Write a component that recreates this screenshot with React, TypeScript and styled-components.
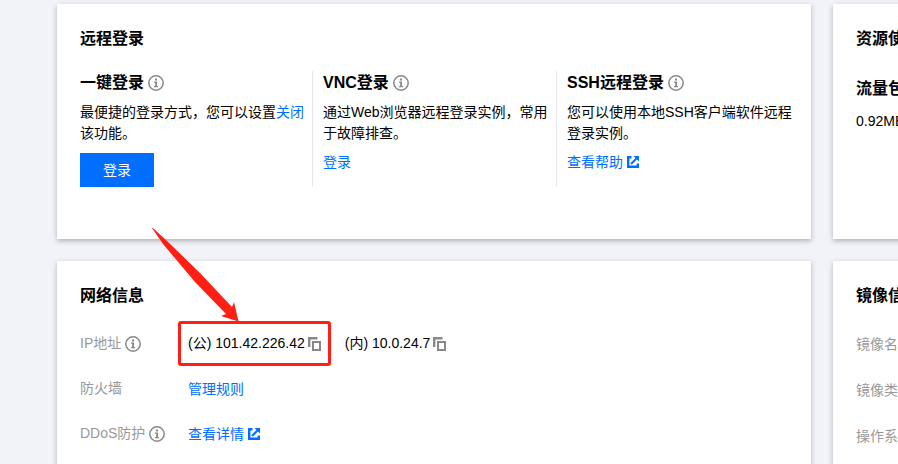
import React from "react";
import styled, { createGlobalStyle } from "styled-components";

const GlobalStyle = createGlobalStyle`
  * { box-sizing: border-box; }
  body {
    margin: 0;
    background: #f2f3f8;
    color: #000;
    font: 14px/21px "Liberation Sans", "Noto Sans CJK SC", sans-serif;
    overflow: hidden;
  }
`;

const Page = styled.main`
  min-height: 100vh;
  padding: 4px 0 0 57px;
  overflow: hidden;
`;

const Board = styled.div`
  display: grid;
  grid-template-columns: minmax(0, 1fr) 320px;
  gap: 22px;
  margin-right: -255px;
`;

const Card = styled.section`
  padding: 23px 11px 52px 23px;
  background: #fff;
  box-shadow: 0 2px 5px rgba(54, 58, 80, 0.36);
`;

const CardTitle = styled.h2`
  margin: 0 0 20px;
  font-size: 16px;
  line-height: 24px;
  font-weight: 700;
`;

const Methods = styled.div`
  display: grid;
  grid-template-columns: repeat(3, minmax(0, 1fr));
  margin-left: -12px;
`;

const Method = styled.div`
  padding: 0 6px 0 10px;
  border-left: 1px solid #e5e7ed;

  &:first-child {
    padding-left: 12px;
    border-left: 0;
  }
`;

const MethodTitle = styled.h3`
  display: flex;
  align-items: center;
  gap: 4px;
  margin: 0 0 7px;
  font-size: 16px;
  line-height: 24px;
  font-weight: 700;
`;

const Paragraph = styled.p`
  margin: 0 0 9px;
`;

const Link = styled.a`
  display: flex;
  align-items: center;
  gap: 4px;
  width: fit-content;
  color: #006eff;
  line-height: 18px;
  text-decoration: none;
`;

const InlineLink = styled.a`
  color: #006eff;
  text-decoration: none;
`;

const PrimaryButton = styled.button`
  display: block;
  height: 34px;
  padding: 0 23px;
  border: 0;
  background: #006eff;
  color: #fff;
  font: inherit;
`;

const UsageTitle = styled.h3`
  margin: 26px 0 10px;
  font-size: 16px;
  line-height: 24px;
  font-weight: 700;
`;

const Fields = styled.dl<{ $loose?: boolean }>`
  display: grid;
  gap: ${({ $loose }) => ($loose ? "25px" : "24px")};
  margin: 0;
  padding-top: ${({ $loose }) => ($loose ? "6px" : "5px")};
`;

const Field = styled.div`
  display: flex;
  align-items: center;
`;

const FieldLabel = styled.dt`
  display: flex;
  flex: 0 0 108px;
  align-items: center;
  gap: 4px;
  color: #999;
`;

const FieldValue = styled.dd`
  display: flex;
  gap: 24px;
  margin: 0;
`;

const Address = styled.span`
  position: relative;
  display: flex;
  align-items: center;
  gap: 3px;
`;

const IconButton = styled.button`
  display: flex;
  padding: 0;
  border: 0;
  background: none;
  color: #888;
`;

const Highlight = styled.span`
  position: absolute;
  inset: -12px -10px;
  border: 3px solid #ff1f14;
  border-radius: 3px;
  pointer-events: none;
`;

const Arrow = styled.svg`
  position: absolute;
  left: -29px;
  bottom: 100%;
`;

const Glyph = styled.svg`
  display: block;
  flex: none;
`;

function InfoIcon() {
  return (
    <Glyph width="16" height="16" viewBox="0 0 16 16" fill="none" aria-hidden="true">
      <circle cx="8" cy="8" r="7.2" stroke="#888" strokeWidth="1.5" />
      <path d="M7 3.500h2v2H7zM6 6.500h3V11h1v1.200H6V11h1.200V7.700H6z" fill="#888" />
    </Glyph>
  );
}

function CopyIcon() {
  return (
    <Glyph width="13" height="14" viewBox="0 0 13 14" fill="none" stroke="currentColor" aria-hidden="true">
      <path d="M9.500 1.200H1.200V10" strokeWidth="2.400" />
      <path d="M5 5h7v8H5z" strokeWidth="2" />
    </Glyph>
  );
}

function ExternalIcon() {
  return (
    <Glyph width="12" height="12" viewBox="0 0 12 12" fill="none" stroke="#006eff" aria-hidden="true">
      <path d="M4.500 1.200H1.200v9.600h9.600V7.500" strokeWidth="2.400" />
      <path d="M4 8l5.500-5.500" strokeWidth="2" />
      <path d="M6.500 0H12v5.500z" fill="#006eff" stroke="none" />
    </Glyph>
  );
}

const imageFields = ["镜像名称", "镜像类型", "操作系统"];

export default function App() {
  return (
    <>
      <GlobalStyle />
      <Page>
        <Board>
          <Card>
            <CardTitle>远程登录</CardTitle>
            <Methods>
              <Method>
                <MethodTitle>一键登录<InfoIcon /></MethodTitle>
                <Paragraph>
                  最便捷的登录方式，您可以设置<InlineLink href="#close">关闭</InlineLink>该功能。
                </Paragraph>
                <PrimaryButton type="button">登录</PrimaryButton>
              </Method>
              <Method>
                <MethodTitle>VNC登录<InfoIcon /></MethodTitle>
                <Paragraph>通过Web浏览器远程登录实例，常用于故障排查。</Paragraph>
                <Link href="#vnc">登录</Link>
              </Method>
              <Method>
                <MethodTitle>SSH远程登录<InfoIcon /></MethodTitle>
                <Paragraph>您可以使用本地SSH客户端软件远程登录实例。</Paragraph>
                <Link href="#help">查看帮助<ExternalIcon /></Link>
              </Method>
            </Methods>
          </Card>
          <Card>
            <CardTitle>资源使用</CardTitle>
            <UsageTitle>流量包</UsageTitle>
            <Paragraph>0.92MB</Paragraph>
          </Card>
          <Card>
            <CardTitle>网络信息</CardTitle>
            <Fields>
              <Field>
                <FieldLabel>IP地址<InfoIcon /></FieldLabel>
                <FieldValue>
                  <Address>
                    (公) 101.42.226.42
                    <IconButton type="button" aria-label="复制公网IP"><CopyIcon /></IconButton>
                    <Highlight>
                      <Arrow width="88" height="96" viewBox="0 0 88 96" aria-hidden="true">
                        <path
                          d="M0 0H1Q2 1 14 12L48 45L80 79L82 74L86.500 93.500L69 88L74 86L43 54L11 16Z"
                          fill="#ff1f14"
                        />
                      </Arrow>
                    </Highlight>
                  </Address>
                  <Address>
                    (内) 10.0.24.7
                    <IconButton type="button" aria-label="复制内网IP"><CopyIcon /></IconButton>
                  </Address>
                </FieldValue>
              </Field>
              <Field>
                <FieldLabel>防火墙</FieldLabel>
                <FieldValue><Link href="#rules">管理规则</Link></FieldValue>
              </Field>
              <Field>
                <FieldLabel>DDoS防护<InfoIcon /></FieldLabel>
                <FieldValue><Link href="#ddos">查看详情<ExternalIcon /></Link></FieldValue>
              </Field>
            </Fields>
          </Card>
          <Card>
            <CardTitle>镜像信息</CardTitle>
            <Fields $loose>
              {imageFields.map((label) => (
                <Field key={label}><FieldLabel>{label}</FieldLabel></Field>
              ))}
            </Fields>
          </Card>
        </Board>
      </Page>
    </>
  );
}
